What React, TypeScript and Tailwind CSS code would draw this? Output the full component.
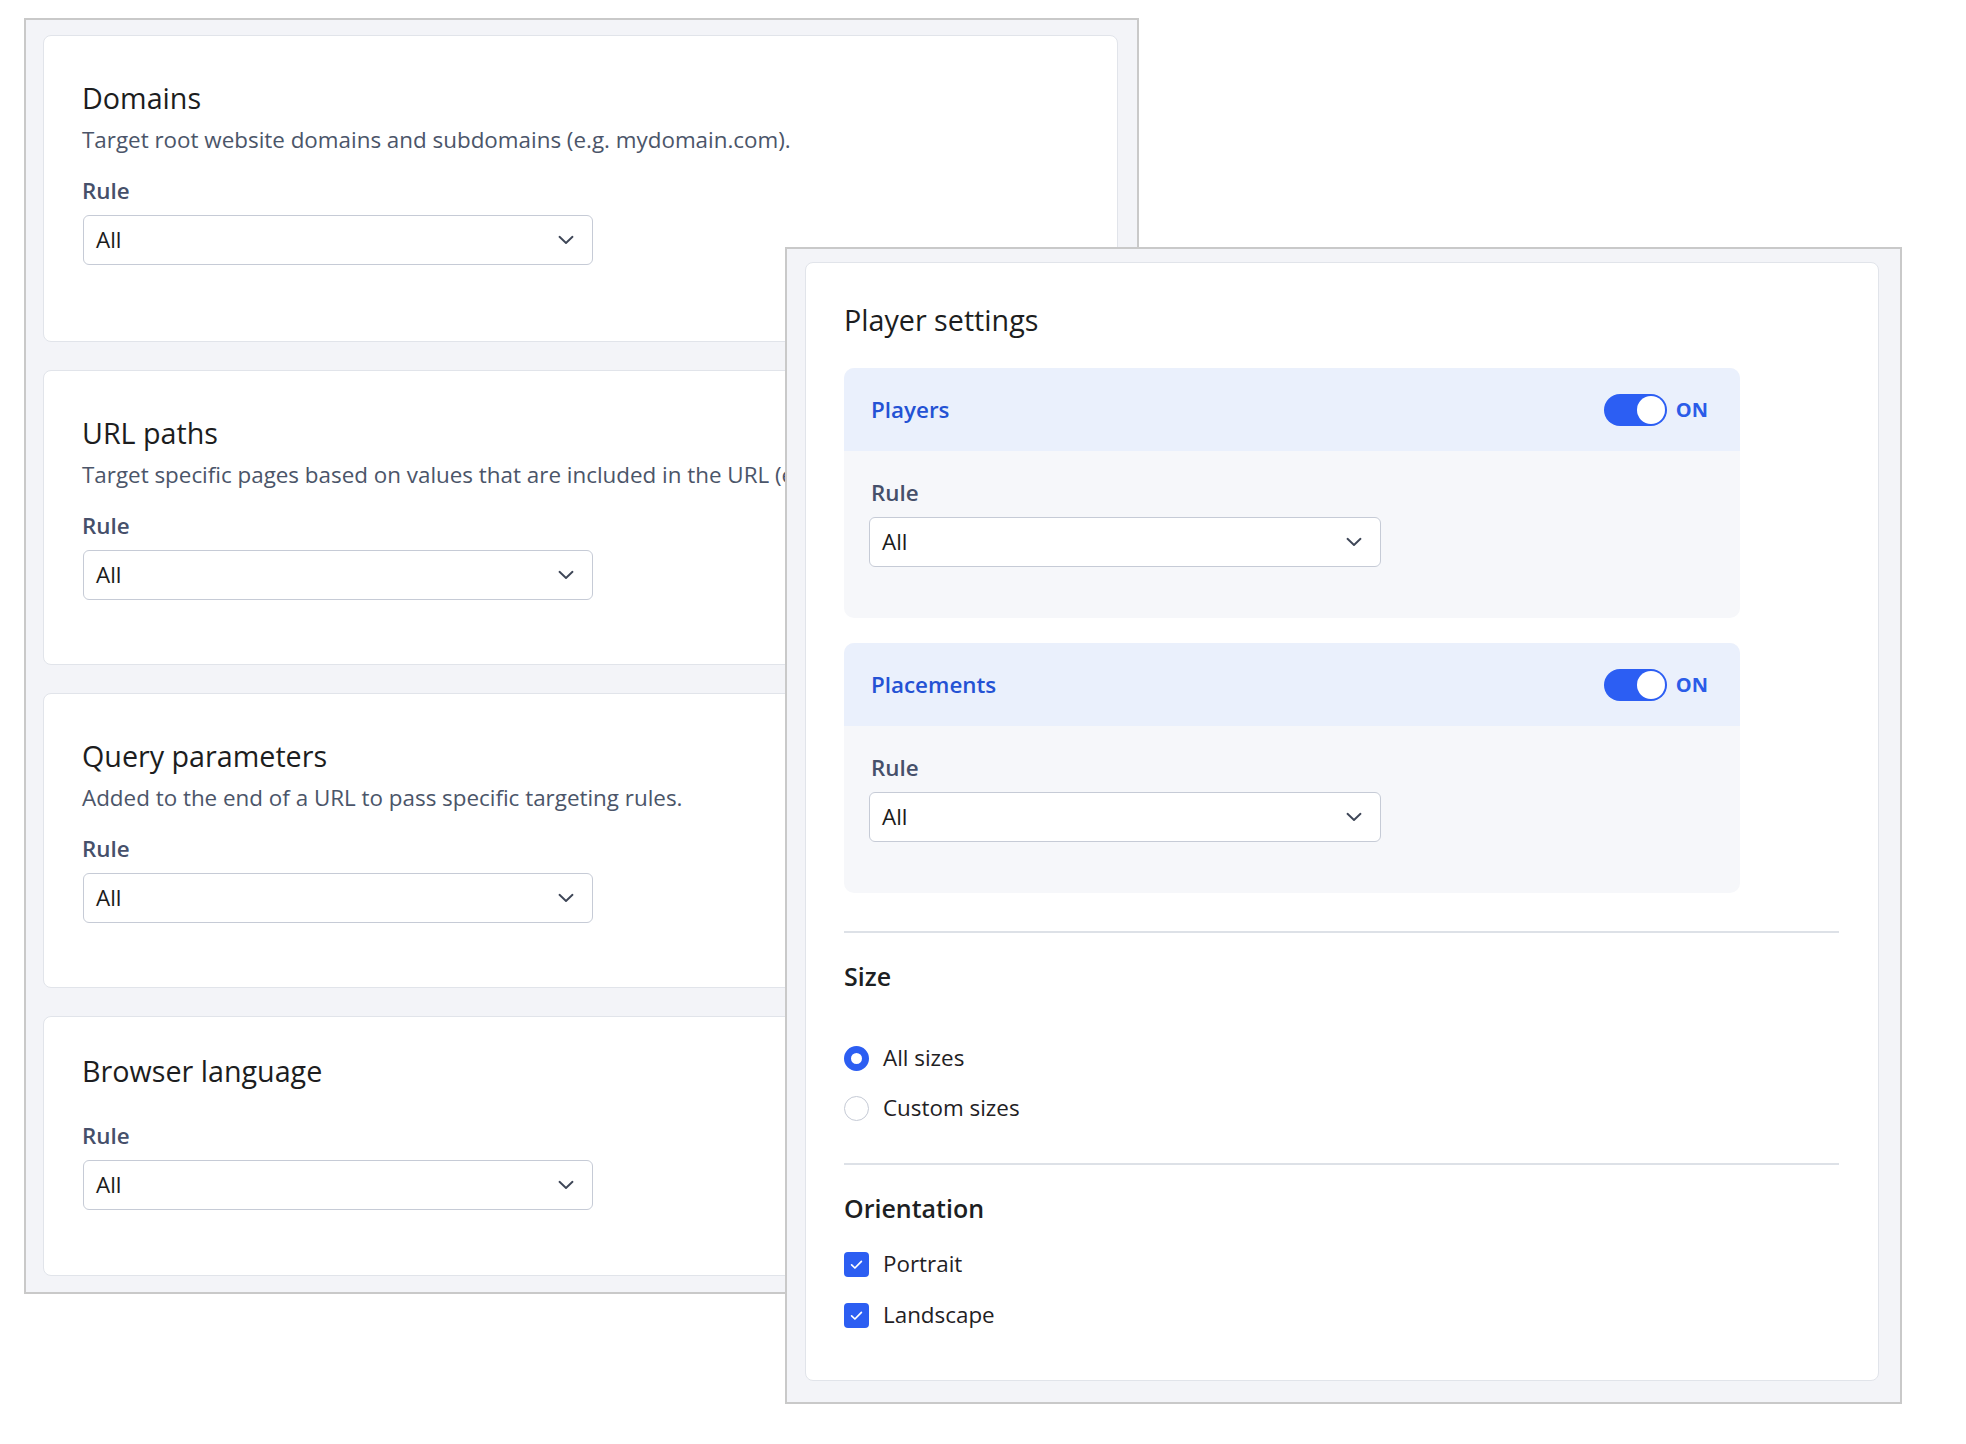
import React from "react";

const Chevron = () => (
  <svg width="16" height="10" viewBox="0 0 16 10" fill="none">
    <path
      d="M1.5 1.8 L8 8 L14.5 1.8"
      stroke="#3e4657"
      strokeWidth="1.9"
      strokeLinecap="round"
      strokeLinejoin="round"
    />
  </svg>
);

const RuleSelect = ({ width }: { width: string }) => (
  <div
    className={`flex h-[50px] ${width} items-center justify-between rounded-[6px] border border-[#c6cbd6] bg-white pl-[12px] pr-[18px]`}
  >
    <span className="text-[22.4px] leading-[30px] text-[#1b1b1b]">All</span>
    <Chevron />
  </div>
);

const RuleLabel = ({ className }: { className: string }) => (
  <div className={`text-[22.4px] font-semibold leading-[30px] text-[#46506a] ${className}`}>
    Rule
  </div>
);

interface TargetCardProps {
  title: string;
  desc?: string;
  padding: string;
}

const TargetCard = ({ title, desc, padding }: TargetCardProps) => (
  <div className={`rounded-[8px] border border-[#e1e4ea] bg-white pl-[38px] ${padding}`}>
    <h2 className="text-[28.7px] leading-[38px] text-[#1c1d20]">{title}</h2>
    {desc ? (
      <>
        <p className="mt-[8px] whitespace-nowrap text-[22.4px] leading-[30px] text-[#4b5569]">
          {desc}
        </p>
        <RuleLabel className="mt-[21px]" />
      </>
    ) : (
      <RuleLabel className="mt-[31px]" />
    )}
    <div className="mt-[9px] pl-[1px]">
      <RuleSelect width="w-[510px]" />
    </div>
  </div>
);

const Toggle = () => (
  <div className="flex items-center gap-[9px]">
    <div className="flex h-[32px] w-[63px] items-center justify-end rounded-full bg-[#2c5ef3] pr-[2px]">
      <div className="h-[28px] w-[28px] rounded-full bg-white" />
    </div>
    <span className="text-[20px] font-bold leading-none text-[#2b5ce8]">ON</span>
  </div>
);

const SettingBox = ({ title }: { title: string }) => (
  <div className="w-[896px] overflow-hidden rounded-[10px] bg-[#f6f7fa]">
    <div className="flex h-[83px] items-center justify-between bg-[#eaf0fc] pl-[27px] pr-[32px]">
      <span className="text-[22.4px] font-semibold leading-[30px] text-[#2452d4]">{title}</span>
      <Toggle />
    </div>
    <div className="pb-[51px] pl-[25px] pt-[27px]">
      <RuleLabel className="pl-[2px]" />
      <div className="mt-[9px]">
        <RuleSelect width="w-[512px]" />
      </div>
    </div>
  </div>
);

const Radio = ({ checked, label }: { checked?: boolean; label: string }) => (
  <div className="flex h-[34px] items-center gap-[14px]">
    {checked ? (
      <div className="h-[25px] w-[25px] rounded-full border-[7px] border-[#2c5ef2] bg-white" />
    ) : (
      <div className="h-[25px] w-[25px] rounded-full border border-[#c5cad5] bg-white" />
    )}
    <span className="text-[22.4px] leading-[30px] text-[#1f2124]">{label}</span>
  </div>
);

const Check = ({ label }: { label: string }) => (
  <div className="flex h-[34px] items-center gap-[14px]">
    <div className="flex h-[25px] w-[25px] items-center justify-center rounded-[4px] bg-[#2c5ef2]">
      <svg width="25" height="25" viewBox="0 0 25 25" fill="none">
        <path
          d="M7.6 12.9 L10.9 16 L17.4 9.4"
          stroke="white"
          strokeWidth="1.7"
          strokeLinecap="round"
          strokeLinejoin="round"
        />
      </svg>
    </div>
    <span className="text-[22.4px] leading-[30px] text-[#1f2124]">{label}</span>
  </div>
);

export default function App() {
  return (
    <div className="relative h-[1444px] w-[1966px] overflow-hidden bg-white font-['Open_Sans',sans-serif]">
      {/* targeting window */}
      <div className="absolute left-[24px] top-[18px] w-[1115px] border-2 border-[#c9c9c9] bg-[#f3f4f8] pb-[16px] pl-[17px] pr-[19px] pt-[15px]">
        <div className="flex flex-col gap-[28px]">
          <TargetCard
            title="Domains"
            desc="Target root website domains and subdomains (e.g. mydomain.com)."
            padding="pt-[43px] pb-[76px]"
          />
          <TargetCard
            title="URL paths"
            desc="Target specific pages based on values that are included in the URL (e.g."
            padding="pt-[43px] pb-[64px]"
          />
          <TargetCard
            title="Query parameters"
            desc="Added to the end of a URL to pass specific targeting rules."
            padding="pt-[43px] pb-[64px]"
          />
          <TargetCard title="Browser language" padding="pt-[35px] pb-[65px]" />
        </div>
      </div>

      {/* player settings window */}
      <div className="absolute left-[785px] top-[247px] w-[1117px] border-2 border-[#c9c9c9] bg-[#f3f4f8] pb-[21px] pl-[18px] pr-[21px] pt-[13px]">
        <div className="rounded-[8px] border border-[#e1e4ea] bg-white pb-[48px] pl-[38px] pr-[39px] pt-[38px]">
          <h2 className="text-[28.7px] leading-[38px] text-[#1c1d20]">Player settings</h2>
          <div className="mt-[29px] flex flex-col gap-[25px]">
            <SettingBox title="Players" />
            <SettingBox title="Placements" />
          </div>

          <div className="mt-[38px] h-[2px] bg-[#dde1e7]" />
          <h3 className="mt-[26px] text-[25px] font-semibold leading-[34px] text-[#1d1f23]">Size</h3>
          <div className="mt-[48px] flex flex-col gap-[16px]">
            <Radio checked label="All sizes" />
            <Radio label="Custom sizes" />
          </div>

          <div className="mt-[38px] h-[2px] bg-[#dde1e7]" />
          <h3 className="mt-[26px] text-[25px] font-semibold leading-[34px] text-[#1d1f23]">
            Orientation
          </h3>
          <div className="mt-[22px] flex flex-col gap-[17px]">
            <Check label="Portrait" />
            <Check label="Landscape" />
          </div>
        </div>
      </div>
    </div>
  );
}
